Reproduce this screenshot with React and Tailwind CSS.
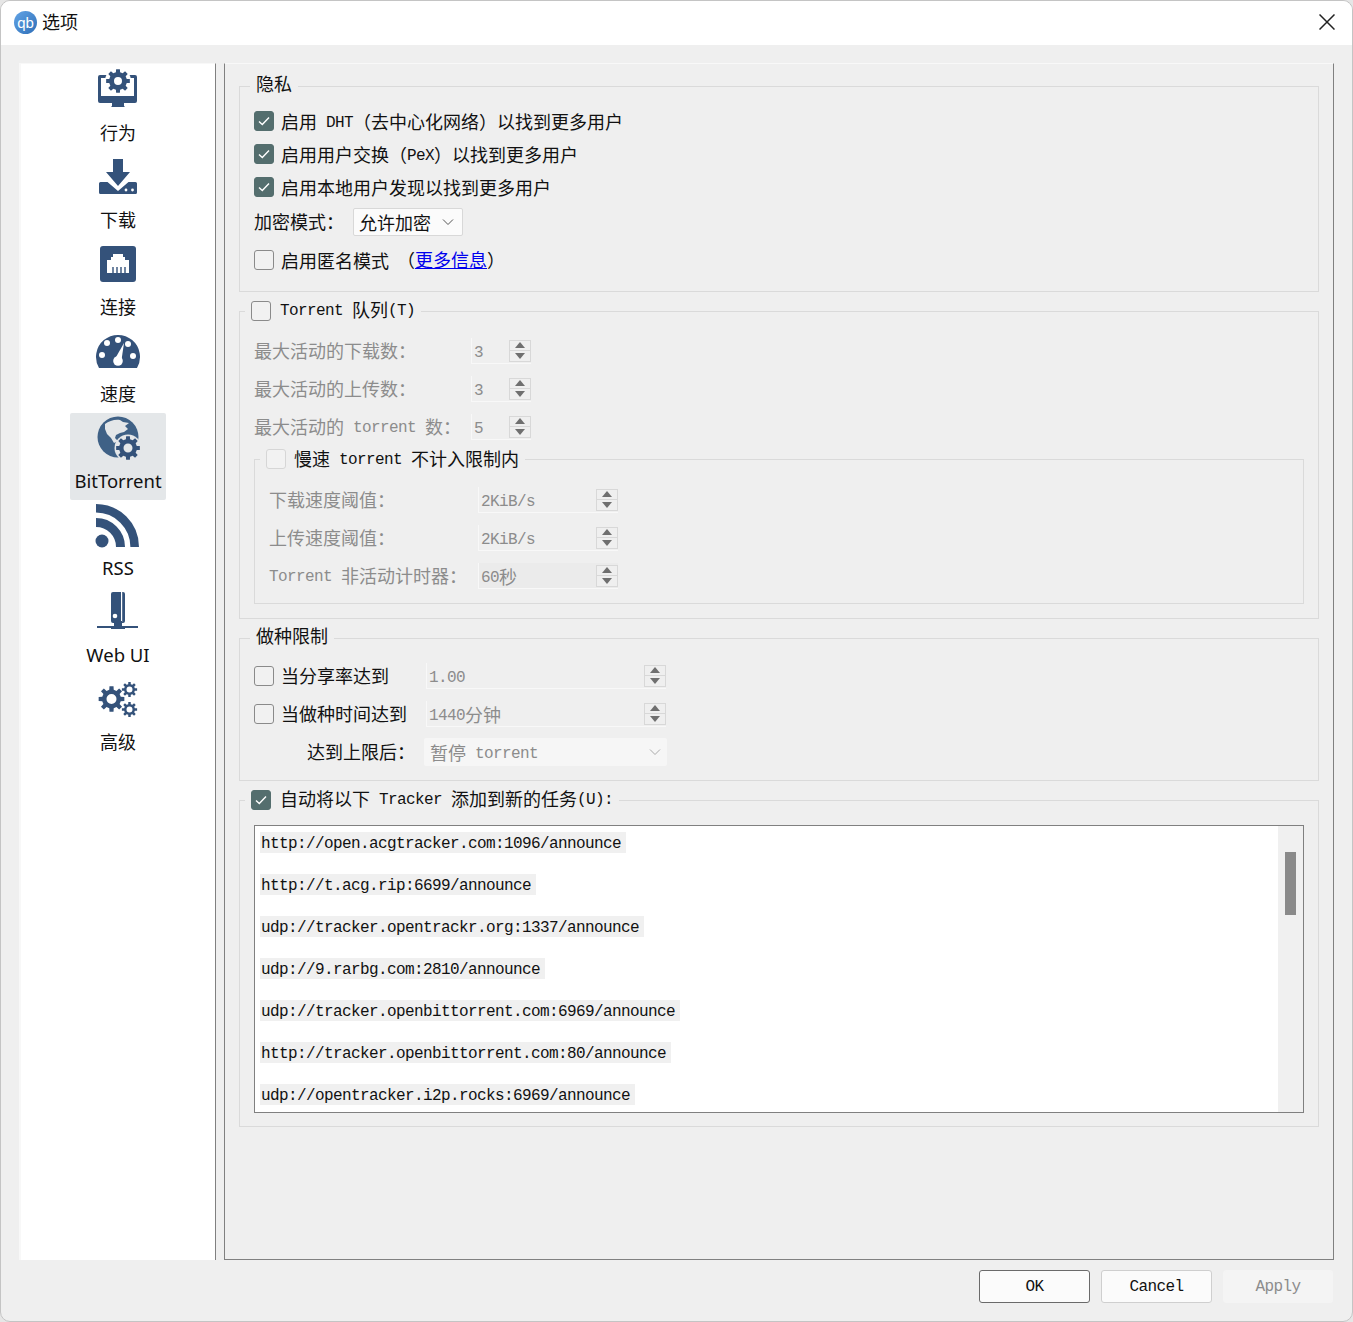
import React from "react";

const NAVY = "#34527a";

// splits mixed text, latin goes in the mono face, cjk in the noto face
const T = ({ children }) => {
  const parts = String(children).split(/([\x00-\x7f]+)/).filter(Boolean);
  return (
    <span className="whitespace-pre font-['Noto_Sans_CJK_SC',sans-serif] text-[18px] leading-6">
      {parts.map((p, i) =>
        /^[\x00-\x7f]/.test(p) ? (
          <span key={i} className="align-[2px] font-['Liberation_Mono',monospace] text-[16px] leading-none tracking-[-0.6px]">
            {p}
          </span>
        ) : (
          <span key={i}>{p}</span>
        )
      )}
    </span>
  );
};

const gearPath = (cx, cy, ro, ri, teeth, hole) => {
  const pts = [];
  const step = (Math.PI * 2) / teeth;
  for (let i = 0; i < teeth; i++) {
    const a = i * step - Math.PI / 2;
    const w = step * 0.2;
    const w2 = step * 0.3;
    [
      [ri, a - w2],
      [ro, a - w],
      [ro, a + w],
      [ri, a + w2],
    ].forEach(([r, t]) => {
      pts.push(`${(cx + r * Math.cos(t)).toFixed(2)} ${(cy + r * Math.sin(t)).toFixed(2)}`);
    });
  }
  let d = "M" + pts.join("L") + "Z";
  if (hole) {
    d += `M${cx - hole} ${cy}a${hole} ${hole} 0 1 0 ${hole * 2} 0a${hole} ${hole} 0 1 0 ${-hole * 2} 0Z`;
  }
  return d;
};

const Svg = ({ children }) => (
  <svg width="48" height="48" viewBox="0 0 48 48" className="block shrink-0">
    {children}
  </svg>
);

const BehaviorIcon = () => (
  <Svg>
    <path fill={NAVY} d="M6 10h35a2 2 0 0 1 2 2v24a2 2 0 0 1-2 2H30v3l1 1H17l1-1v-3H6a2 2 0 0 1-2-2V12a2 2 0 0 1 2-2z" />
    <path fill="#fff" d="M7 13h33v18H7z" />
    <circle cx="24" cy="16" r="13" fill="#fff" />
    <path fill={NAVY} fillRule="evenodd" d={gearPath(24, 16, 12, 9, 8, 4)} />
  </Svg>
);

const DownloadIcon = () => (
  <Svg>
    <path fill={NAVY} d="M19 7h10v13h7L24 34L12 20h7z" />
    <path fill={NAVY} d="M6.500 30h7l10.500 9l10.500-9h7a1.500 1.500 0 0 1 1.500 1.500v9a1.500 1.500 0 0 1-1.500 1.500h-35A1.500 1.500 0 0 1 5 40.500v-9A1.500 1.500 0 0 1 6.500 30z" />
    <circle cx="32" cy="38" r="1.400" fill="#fff" />
    <circle cx="38.500" cy="38" r="1.400" fill="#fff" />
  </Svg>
);

const ConnectionIcon = () => (
  <Svg>
    <rect x="6" y="7" width="36" height="36" rx="3" fill={NAVY} />
    <path fill="#fff" d="M13 21h4v-3h2v-3h10v3h2v3h4v13H13z" />
    <path stroke={NAVY} strokeWidth="1.400" d="M19 28v6M23 28v6M27 28v6M31 28v6" />
  </Svg>
);

const SpeedIcon = () => (
  <Svg>
    <path fill={NAVY} d="M5 42A22 22 0 1 1 43 42z" />
    <g fill="#fff">
      <circle cx="24" cy="14" r="3" />
      <circle cx="8" cy="29" r="3" />
      <circle cx="13" cy="17" r="3" />
      <circle cx="39" cy="30" r="3" />
      <circle cx="34" cy="18" r="3" />
      <path d="M21.500 32L30 17l-2.500 17z" />
      <circle cx="24" cy="35" r="4.800" />
    </g>
  </Svg>
);

const BitTorrentIcon = () => (
  <Svg>
    <circle cx="24" cy="24" r="20.500" fill="#3f6186" />
    <path fill="#e4e7e9" d="M11 11c4-3 10-5 15-4l3 2l6 1l-4 3l3 3l-4 3l-4 1l-4 2l-1 3l3 3l-4 2l-3-5l-4-4l-2-5z" />
    <path fill="#e4e7e9" d="M22 33l3 2l1 2l-2 6l-2-4z" />
    <circle cx="34" cy="35" r="13.500" fill="#e4e7e9" />
    <path fill={NAVY} fillRule="evenodd" d={gearPath(34, 35, 12, 9, 8, 4.500)} />
  </Svg>
);

const RssIcon = () => (
  <Svg>
    <circle cx="8" cy="41" r="6.500" fill={NAVY} />
    <path fill="none" stroke={NAVY} strokeWidth="9" d="M2 22.500A24.500 24.500 0 0 1 26.500 47" />
    <path fill="none" stroke={NAVY} strokeWidth="8.600" d="M2 8.300A38.700 38.700 0 0 1 40.700 47" />
  </Svg>
);

const WebUiIcon = () => (
  <Svg>
    <path fill={NAVY} d="M19 5h10a2 2 0 0 1 2 2v27a2 2 0 0 1-2 2H19a2 2 0 0 1-2-2V7a2 2 0 0 1 2-2z" />
    <rect x="27" y="5" width="1.200" height="30" fill="#fff" />
    <circle cx="21" cy="29" r="2.300" fill="#fff" />
    <path fill={NAVY} d="M20 34h8v5h16v2H31v1H17v-1H3v-2h17z" />
  </Svg>
);

const AdvancedIcon = () => (
  <Svg>
    <g fill={NAVY} fillRule="evenodd">
      <path d={gearPath(17.500, 25, 13, 9.500, 8, 5)} />
      <path d={gearPath(35.500, 15.500, 7.700, 5.500, 8, 3)} />
      <path d={gearPath(35.500, 35.500, 7.700, 5.500, 8, 3)} />
    </g>
  </Svg>
);

const ITEMS = [
  { label: "行为", icon: <BehaviorIcon /> },
  { label: "下载", icon: <DownloadIcon /> },
  { label: "连接", icon: <ConnectionIcon /> },
  { label: "速度", icon: <SpeedIcon /> },
  { label: "BitTorrent", icon: <BitTorrentIcon />, active: true },
  { label: "RSS", icon: <RssIcon /> },
  { label: "Web UI", icon: <WebUiIcon /> },
  { label: "高级", icon: <AdvancedIcon /> },
];

const SideItem = ({ label, icon, active }) => (
  <div className={`flex h-[87px] w-[96px] flex-col items-center rounded-[2px] ${active ? "bg-[#e4e7e9]" : ""}`}>
    {icon}
    <div
      className={`mt-2 h-6 whitespace-nowrap font-['Noto_Sans','Noto_Sans_CJK_SC',sans-serif] leading-6 text-[#111] ${
        /^[a-z]/i.test(label) ? "text-[18.5px]" : "text-[18px]"
      }`}
    >
      {label}
    </div>
  </div>
);

const Check = ({ on, faint }) => (
  <span
    className={`flex h-5 w-5 shrink-0 items-center justify-center rounded-[3px] border ${
      on ? "border-[#546e6e] bg-[#546e6e]" : faint ? "border-[#d6d6d6] bg-[#f2f2f2]" : "border-[#8a8a8a] bg-[#f1f1f1]"
    }`}
  >
    {on && (
      <svg width="14" height="14" viewBox="0 0 14 14" fill="none" stroke="#fff" strokeWidth="1.400">
        <path d="M2 7.500l3.300 3L12 3.500" />
      </svg>
    )}
  </span>
);

const Row = ({ h = "h-[33px]", className = "", children }) => (
  <div className={`flex items-center leading-6 ${h} ${className}`}>{children}</div>
);

const Spin = () => (
  <span className="flex h-[22px] w-[22px] shrink-0 flex-col border border-[#d8d8d8] bg-[#efefef]">
    <span className="flex flex-1 items-center justify-center border-b border-[#d8d8d8]">
      <span className="h-0 w-0 border-x-[5px] border-b-[6px] border-x-transparent border-b-[#6f6f6f]" />
    </span>
    <span className="flex flex-1 items-center justify-center">
      <span className="h-0 w-0 border-x-[5px] border-t-[6px] border-x-transparent border-t-[#6f6f6f]" />
    </span>
  </span>
);

const SpinBox = ({ value, w, fill }) => (
  <div className={`flex h-[26px] items-center justify-between border-b border-l border-[#f8f8f8] pl-[2px] text-[#8c8c8c] ${w} ${fill ? "bg-[#ebebeb]" : ""}`}>
    <T>{value}</T>
    <Spin />
  </div>
);

const Chevron = ({ color }) => (
  <svg width="12" height="12" viewBox="0 0 12 12" fill="none" stroke={color} strokeWidth="1">
    <path d="M1 3.500l5 5l5-5" />
  </svg>
);

const Group = ({ legend, left = "left-[10px]", className = "", children }) => (
  <div className={`relative border border-[#dadada] ${className}`}>
    <div className={`absolute top-0 -mt-px flex -translate-y-1/2 items-center bg-[#efefef] px-1.5 leading-6 text-[#111] ${left}`}>
      {legend}
    </div>
    {children}
  </div>
);

const TRACKERS = [
  "http://open.acgtracker.com:1096/announce",
  "http://t.acg.rip:6699/announce",
  "udp://tracker.opentrackr.org:1337/announce",
  "udp://9.rarbg.com:2810/announce",
  "udp://tracker.openbittorrent.com:6969/announce",
  "http://tracker.openbittorrent.com:80/announce",
  "udp://opentracker.i2p.rocks:6969/announce",
];

const Btn = ({ children, primary, off }) => (
  <button
    className={`h-[33px] rounded-[3px] border font-['Liberation_Mono',monospace] text-[16px] tracking-[-0.6px] ${
      primary
        ? "w-[111px] border-[#6a6a6a] bg-[#fbfbfb] text-[#111]"
        : off
        ? "w-[110px] border-[#f4f4f4] bg-[#f4f4f4] text-[#8c8c8c]"
        : "w-[111px] border-[#cfcfcf] bg-[#fbfbfb] text-[#111]"
    }`}
  >
    {children}
  </button>
);

export default function App() {
  return (
    <div className="h-[1322px] w-[1353px] bg-[#e6e6e6]">
      <div className="flex h-full flex-col overflow-hidden rounded-[10px] border border-[#c4c4c4] bg-[#efefef]">
        <div className="flex h-[44px] shrink-0 items-center bg-white pb-[2px] pl-[13px] pr-[17px] text-[#111]">
          <div className="flex h-[23px] w-[23px] items-center justify-center rounded-full bg-gradient-to-br from-[#62a4e6] to-[#2f6fb8] font-['Liberation_Sans',sans-serif] text-[15px] leading-none text-white">
            qb
          </div>
          <div className="ml-[5px]">
            <T>选项</T>
          </div>
          <svg className="ml-auto" width="16" height="16" viewBox="0 0 16 16" stroke="#222" strokeWidth="1.500" fill="none">
            <path d="M.5.5l15 15M15.500.5l-15 15" />
          </svg>
        </div>

        <div className="flex flex-1 gap-2 px-[18px] pt-[18px]">
          <div className="flex w-[197px] shrink-0 flex-col items-center border-l-2 border-r border-t border-l-[#f8f8f8] border-r-[#808080] border-t-[#f8f8f8] bg-white pt-[1px]">
            {ITEMS.map((it) => (
              <SideItem key={it.label} {...it} />
            ))}
          </div>

          <div className="flex-1 border-x border-b border-t border-x-[#808080] border-b-[#808080] border-t-[#f8f8f8] px-[14px] pt-[22px]">
            <Group legend={<span className="mb-1"><T>隐私</T></span>} className="h-[206px] pt-[17px] pl-[14px]">
              {[
                "启用 DHT（去中心化网络）以找到更多用户",
                "启用用户交换（PeX）以找到更多用户",
                "启用本地用户发现以找到更多用户",
              ].map((s) => (
                <Row key={s} className="gap-[7px] text-[#111]">
                  <Check on />
                  <T>{s}</T>
                </Row>
              ))}
              <Row h="h-[38px]" className="text-[#111]">
                <span className="w-[99px]">
                  <T>加密模式：</T>
                </span>
                <div className="flex h-[28px] w-[110px] items-center justify-between rounded-[2px] border border-[#d8d8d8] bg-[#fbfbfb] pl-[5px] pr-[8px]">
                  <T>允许加密</T>
                  <Chevron color="#555" />
                </div>
              </Row>
              <Row h="h-[38px]" className="gap-[7px] text-[#111]">
                <Check />
                <T>启用匿名模式</T>
                <span className="ml-px">
                  <T>（</T>
                  <span className="text-[#0000ee] underline">
                    <T>更多信息</T>
                  </span>
                  <T>）</T>
                </span>
              </Row>
            </Group>

            <Group
              left="left-[5px]"
              className="mt-[19px] h-[308px] pt-[20px] pl-[14px] pr-[14px]"
              legend={
                <>
                  <Check />
                  <span className="mb-[2px] ml-[9px]">
                    <T>Torrent 队列(T)</T>
                  </span>
                </>
              }
            >
              {[
                ["最大活动的下载数：", "3"],
                ["最大活动的上传数：", "3"],
                ["最大活动的 torrent 数：", "5"],
              ].map(([label, val], i) => (
                <Row key={i} h="h-[38px]" className="text-[#8c8c8c]">
                  <span className="w-[217px]">
                    <T>{label}</T>
                  </span>
                  <SpinBox value={val} w="w-[60px]" />
                </Row>
              ))}
              <Group
                left="left-[5px]"
                className="mt-[13px] h-[145px] pt-[21px] pl-[14px]"
                legend={
                  <>
                    <Check faint />
                    <span className="ml-2">
                      <T>慢速 torrent 不计入限制内</T>
                    </span>
                  </>
                }
              >
                {[
                  ["下载速度阈值：", "2KiB/s"],
                  ["上传速度阈值：", "2KiB/s"],
                  ["Torrent 非活动计时器：", "60秒"],
                ].map(([label, val], i) => (
                  <Row key={i} h="h-[38px]" className="text-[#8c8c8c]">
                    <span className="w-[209px]">
                      <T>{label}</T>
                    </span>
                    <SpinBox value={val} w="w-[140px]" fill={i === 2} />
                  </Row>
                ))}
              </Group>
            </Group>

            <Group legend={<span className="mb-1"><T>做种限制</T></span>} className="mt-[19px] h-[143px] pt-[18px] pl-[14px]">
              {[
                ["当分享率达到", "1.00"],
                ["当做种时间达到", "1440分钟"],
              ].map(([label, val]) => (
                <Row key={label} h="h-[38px]" className="text-[#111]">
                  <Check />
                  <span className="ml-[7px] w-[145px]">
                    <T>{label}</T>
                  </span>
                  <SpinBox value={val} w="w-[240px]" />
                </Row>
              ))}
              <Row h="h-[38px]" className="text-[#111]">
                <span className="ml-[53px] w-[117px]">
                  <T>达到上限后：</T>
                </span>
                <div className="flex h-[28px] w-[243px] items-center justify-between rounded-[2px] bg-[#f6f6f6] pl-[6px] pr-[6px] text-[#8c8c8c]">
                  <T>暂停 torrent</T>
                  <Chevron color="#aaa" />
                </div>
              </Row>
            </Group>

            <Group
              left="left-[5px]"
              className="mt-[19px] h-[327px] pt-[24px] px-[14px]"
              legend={
                <>
                  <Check on />
                  <span className="mb-[2px] ml-[9px]">
                    <T>自动将以下 Tracker 添加到新的任务(U):</T>
                  </span>
                </>
              }
            >
              <div className="flex h-[288px] border border-[#808080] bg-white">
                <div className="flex-1 overflow-hidden pl-[5px] pt-[6px]">
                  {TRACKERS.map((t) => (
                    <div key={t} className="mb-[21px] flex h-[21px] w-fit items-center bg-[#f0f0f0] pb-[2px] pl-[1px] pr-[5px] text-[#111]">
                      <T>{t}</T>
                    </div>
                  ))}
                </div>
                <div className="w-[25px] shrink-0 bg-[#f0f0f0] pl-[7px] pt-[26px]">
                  <div className="h-[63px] w-[11px] bg-[#8a8a8a]" />
                </div>
              </div>
            </Group>
          </div>
        </div>

        <div className="flex h-[61px] shrink-0 items-start justify-end gap-[11px] pr-[19px] pt-[10px]">
          <Btn primary>OK</Btn>
          <Btn>Cancel</Btn>
          <Btn off>Apply</Btn>
        </div>
      </div>
    </div>
  );
}
